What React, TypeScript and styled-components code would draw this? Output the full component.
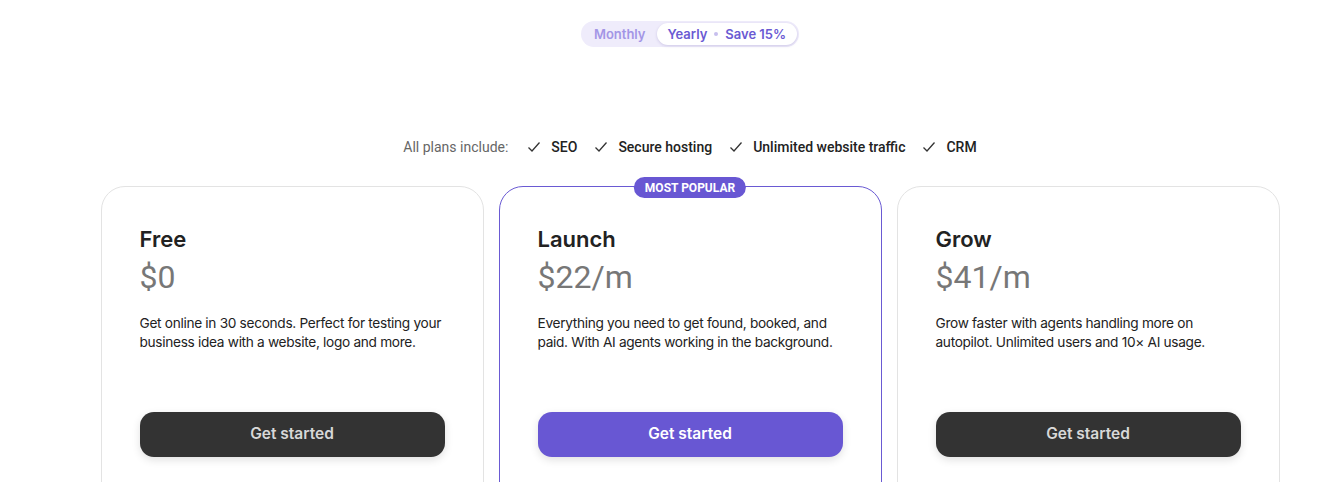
import styled, { createGlobalStyle } from "styled-components";

type Plan = {
  name: string;
  price: string;
  description: string;
  featured?: boolean;
};

const plans: Plan[] = [
  {
    name: "Free",
    price: "$0",
    description:
      "Get online in 30 seconds. Perfect for testing your business idea with a website, logo and more.",
  },
  {
    name: "Launch",
    price: "$22/m",
    description:
      "Everything you need to get found, booked, and paid. With AI agents working in the background.",
    featured: true,
  },
  {
    name: "Grow",
    price: "$41/m",
    description:
      "Grow faster with agents handling more on autopilot. Unlimited users and 10× AI usage.",
  },
];

const included = ["SEO", "Secure hosting", "Unlimited website traffic", "CRM"];

const GlobalStyle = createGlobalStyle`
  * { box-sizing: border-box; }
  body {
    margin: 0;
    background: #fff;
    font-family: Inter, "Noto Sans", sans-serif;
    color: #222;
    overflow: hidden;
  }
`;

const Page = styled.main`
  padding: 21px 0 0 40px;
  display: flex;
  flex-direction: column;
  align-items: center;
`;

const Toggle = styled.div`
  display: flex;
  align-items: center;
  height: 26px;
  padding: 2px;
  border-radius: 13px;
  background: #efecfb;
`;

const ToggleOption = styled.button<{ $active?: boolean }>`
  height: 22px;
  border: none;
  border-radius: 11px;
  padding: 0 11px;
  font-family: Inter, sans-serif;
  font-size: 13px;
  font-weight: 600;
  cursor: pointer;
  display: flex;
  align-items: center;
  gap: 7px;
  background: ${(p) => (p.$active ? "#fff" : "transparent")};
  color: ${(p) => (p.$active ? "#6a5ad3" : "#a396e6")};
  box-shadow: ${(p) => (p.$active ? "0 1px 3px rgba(60, 40, 140, 0.18)" : "none")};
`;

const Dot = styled.span`
  width: 4px;
  height: 4px;
  border-radius: 50%;
  background: #c7bfee;
`;

const Includes = styled.div`
  margin-top: 92px;
  display: flex;
  align-items: center;
  gap: 17px;
  font-family: Roboto, sans-serif;
  font-size: 14px;
`;

const IncludesLabel = styled.span`
  color: #666;
  margin-right: 2px;
`;

const Feature = styled.span`
  display: flex;
  align-items: center;
  gap: 10px;
  color: #222;
  font-weight: 500;
`;

const Cards = styled.div`
  margin-top: 31px;
  display: grid;
  grid-template-columns: repeat(3, 383px);
  gap: 15px;
`;

const Card = styled.section<{ $featured?: boolean }>`
  position: relative;
  height: 340px;
  padding: 38px 38px 0;
  border-radius: 24px;
  border: 1px solid ${(p) => (p.$featured ? "#6a5ad3" : "#e3e3e3")};
  display: flex;
  flex-direction: column;
`;

const Badge = styled.span`
  position: absolute;
  top: -10px;
  left: 50%;
  transform: translateX(-50%);
  height: 21px;
  padding: 0 11px;
  border-radius: 11px;
  background: #6857d3;
  color: #fff;
  font-family: Roboto, sans-serif;
  font-size: 12px;
  font-weight: 700;
  display: flex;
  align-items: center;
  white-space: nowrap;
`;

const Title = styled.h3`
  margin: 0;
  font-size: 22px;
  line-height: 28px;
  font-weight: 600;
  color: #222;
`;

const Price = styled.div`
  margin-top: 5px;
  font-family: Roboto, sans-serif;
  font-size: 32px;
  line-height: 38px;
  color: #777;
`;

const Description = styled.p`
  margin: 18px 0 0;
  font-size: 13.7px;
  letter-spacing: -0.32px;
  line-height: 19px;
  color: #222;
  height: 98px;
`;

const CTA = styled.button<{ $featured?: boolean }>`
  width: 100%;
  height: 45px;
  padding: 0 0 3px;
  border: none;
  border-radius: 14px;
  font-family: Inter, sans-serif;
  font-size: 15.5px;
  font-weight: 600;
  cursor: pointer;
  background: ${(p) => (p.$featured ? "#6857d3" : "#333")};
  color: ${(p) => (p.$featured ? "#fff" : "#d8d8d8")};
  box-shadow: 0 3px 8px rgba(0, 0, 0, 0.12);
`;

const Check = () => (
  <svg width="14" height="14" viewBox="0 0 14 14" fill="none">
    <path d="M1.5 7.5 L5 11 L12.5 2.5" stroke="#333" strokeWidth="1.3" />
  </svg>
);

export default function App() {
  return (
    <>
      <GlobalStyle />
      <Page>
        <Toggle>
          <ToggleOption>Monthly</ToggleOption>
          <ToggleOption $active>
            Yearly <Dot /> Save 15%
          </ToggleOption>
        </Toggle>

        <Includes>
          <IncludesLabel>All plans include:</IncludesLabel>
          {included.map((item) => (
            <Feature key={item}>
              <Check />
              {item}
            </Feature>
          ))}
        </Includes>

        <Cards>
          {plans.map((plan) => (
            <Card key={plan.name} $featured={plan.featured}>
              {plan.featured && <Badge>MOST POPULAR</Badge>}
              <Title>{plan.name}</Title>
              <Price>{plan.price}</Price>
              <Description>{plan.description}</Description>
              <CTA $featured={plan.featured}>Get started</CTA>
            </Card>
          ))}
        </Cards>
      </Page>
    </>
  );
}
